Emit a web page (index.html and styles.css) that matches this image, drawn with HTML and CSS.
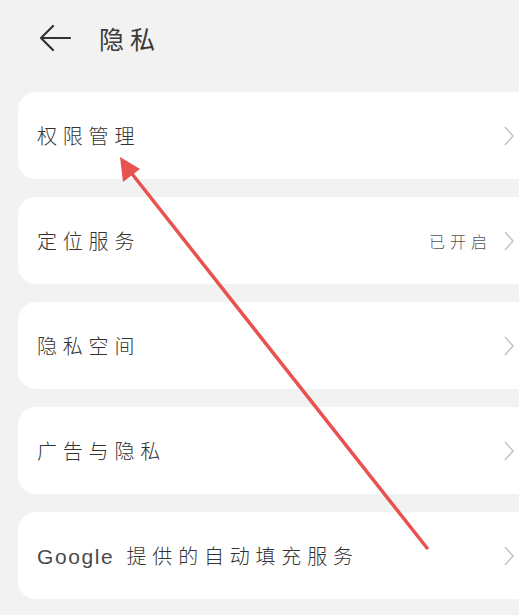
FILE: index.html
```html
<!DOCTYPE html>
<html lang="zh-CN">
<head>
<meta charset="utf-8">
<title>隐私</title>
<link rel="stylesheet" href="styles.css">
</head>
<body>
<div class="page">
  <header class="topbar">
    <svg class="back" width="32" height="28" viewBox="0 0 32 28">
      <path d="M14 2 L2 14 L14 26 M2 14 H31" fill="none" stroke="#333" stroke-width="2.2" stroke-linecap="round" stroke-linejoin="round"/>
    </svg>
    <h1 class="title">隐私</h1>
  </header>
  <main class="list">
    <div class="card"><span class="label">权限管理</span><span class="right"><svg class="chev" width="10" height="20" viewBox="0 0 10 20"><path d="M1 1 L9 10 L1 19" fill="none" stroke="#c4c4c4" stroke-width="1.6" stroke-linejoin="round"/></svg></span></div>
    <div class="card"><span class="label">定位服务</span><span class="right"><span class="value">已开启</span><svg class="chev" width="10" height="20" viewBox="0 0 10 20"><path d="M1 1 L9 10 L1 19" fill="none" stroke="#c4c4c4" stroke-width="1.6" stroke-linejoin="round"/></svg></span></div>
    <div class="card"><span class="label">隐私空间</span><span class="right"><svg class="chev" width="10" height="20" viewBox="0 0 10 20"><path d="M1 1 L9 10 L1 19" fill="none" stroke="#c4c4c4" stroke-width="1.6" stroke-linejoin="round"/></svg></span></div>
    <div class="card"><span class="label">广告与隐私</span><span class="right"><svg class="chev" width="10" height="20" viewBox="0 0 10 20"><path d="M1 1 L9 10 L1 19" fill="none" stroke="#c4c4c4" stroke-width="1.6" stroke-linejoin="round"/></svg></span></div>
    <div class="card"><span class="label"><span class="latin">Google</span> 提供的自动填充服务</span><span class="right"><svg class="chev" width="10" height="20" viewBox="0 0 10 20"><path d="M1 1 L9 10 L1 19" fill="none" stroke="#c4c4c4" stroke-width="1.6" stroke-linejoin="round"/></svg></span></div>
  </main>
  <svg class="pointer" width="519" height="615" viewBox="0 0 519 615">
    <path d="M427 548 L129 170" stroke="#e8524f" stroke-width="3.5" stroke-linecap="round" fill="none"/>
    <polygon points="120,157 140,169 123,182" fill="#e8524f"/>
  </svg>
</div>
</body>
</html>
```

FILE: styles.css
```css
html, body {
  margin: 0;
  padding: 0;
  background: #f2f2f2;
  overflow: hidden;
}
.page {
  position: relative;
  width: 519px;
  height: 615px;
  overflow: hidden;
  font-family: "Noto Sans CJK SC", "Noto Sans", sans-serif;
  color: #3a3a3a;
}
.topbar {
  display: flex;
  align-items: center;
  height: 76px;
  padding-left: 39px;
}
.back {
  display: block;
}
.title {
  margin: 0 0 0 28px;
  font-size: 25px;
  font-weight: 400;
  letter-spacing: 6px;
  color: #3a3a3a;
}
.list {
  display: flex;
  flex-direction: column;
  gap: 18px;
  padding-top: 16px;
  margin-left: 18px;
  width: 540px;
}
.card {
  display: flex;
  align-items: center;
  justify-content: space-between;
  height: 87px;
  background: #fff;
  border-radius: 18px;
  padding: 0 44px 0 19px;
  box-sizing: border-box;
}
.label {
  font-size: 20px;
  letter-spacing: 5.8px;
  font-weight: 300;
  color: #333;
}
.latin {
  font-family: "Liberation Sans", sans-serif;
  font-size: 21px;
  letter-spacing: 1.6px;
  font-weight: 400;
  color: #4a4a4a;
  margin-right: 2px;
}
.right {
  display: flex;
  align-items: center;
  gap: 12px;
}
.value {
  font-size: 16px;
  letter-spacing: 5px;
  color: #555;
  font-weight: 300;
}
.chev {
  display: block;
}
.pointer {
  position: absolute;
  left: 0;
  top: 0;
  pointer-events: none;
}
```
